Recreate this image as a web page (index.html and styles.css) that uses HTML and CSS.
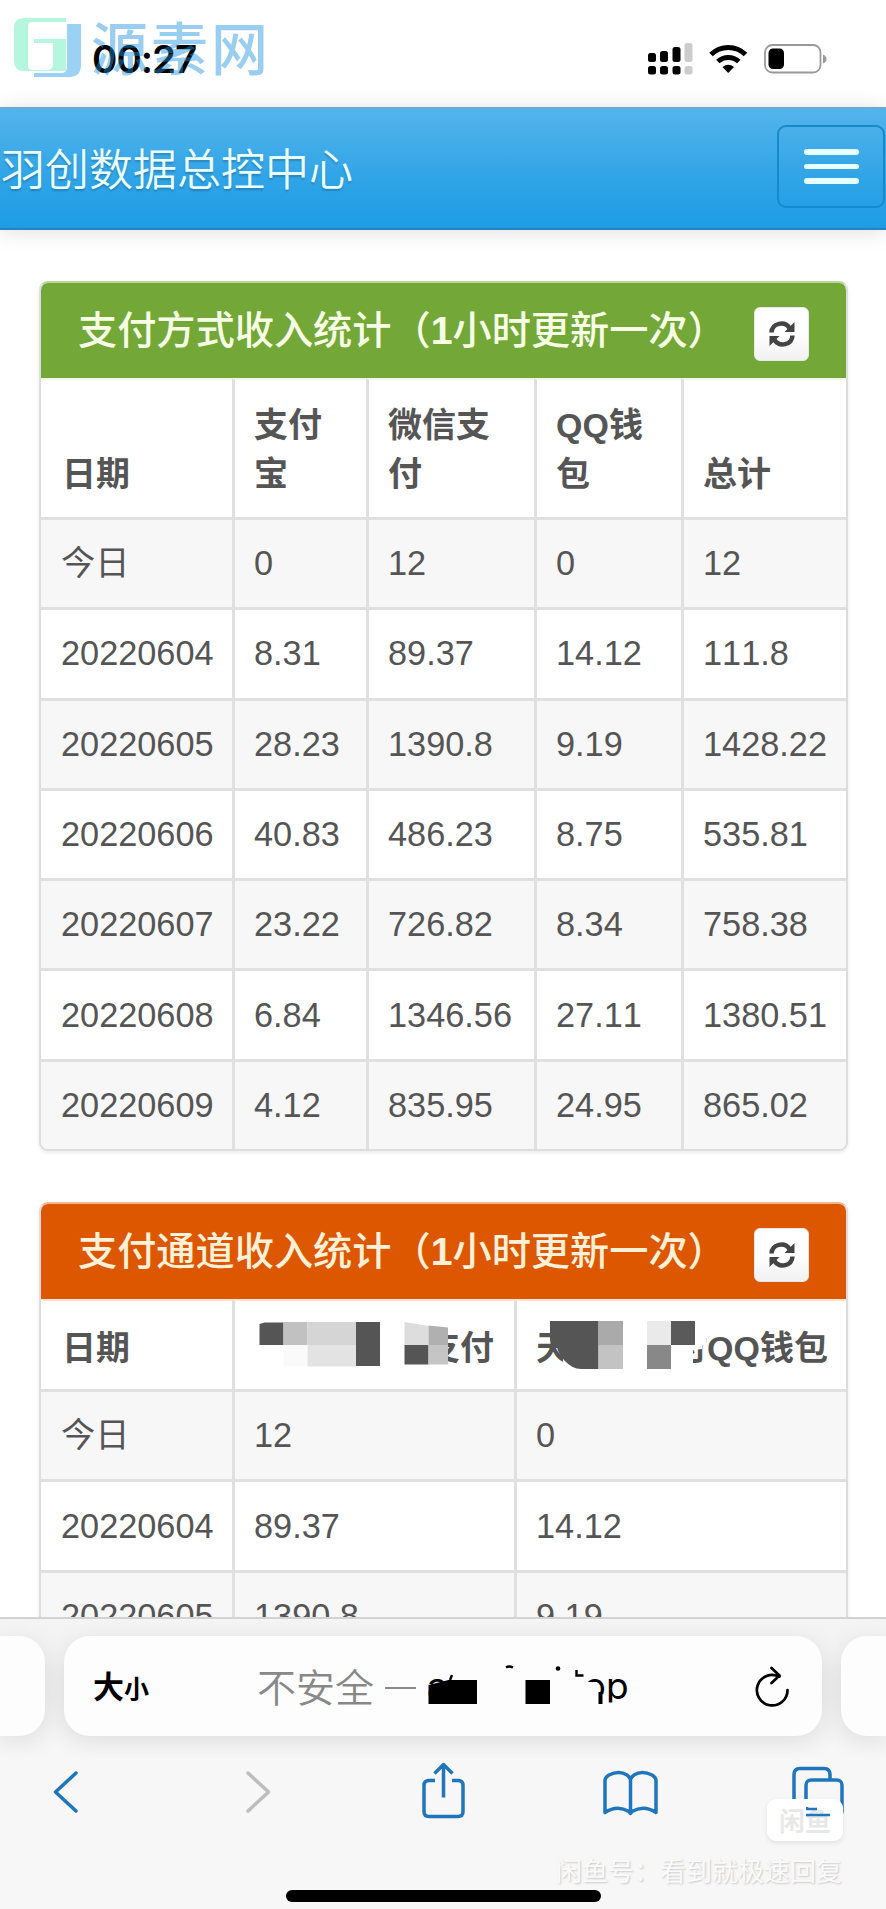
FILE: index.html
```html
<!DOCTYPE html>
<html lang="zh-CN">
<head>
<meta charset="utf-8">
<title>羽创数据总控中心</title>
<link rel="stylesheet" href="styles.css">
</head>
<body>
<div class="screen">
  <header class="status">
    <span class="time">00:27</span>
    <svg class="status-icons" width="180" height="34" viewBox="647 42 180 34">
      <g fill="#000"><rect x="648" y="53" width="8" height="9" rx="2.5"/><rect x="660" y="51" width="8" height="11" rx="2.5"/><rect x="672.500" y="47" width="8" height="15" rx="2.5"/><rect x="648" y="66" width="8" height="8.500" rx="2.500"/><rect x="660" y="66" width="8" height="8.500" rx="2.500"/><rect x="672.500" y="66" width="8" height="8.500" rx="2.500"/></g>
      <g fill="#ccc"><rect x="684.500" y="43" width="8" height="19" rx="2.500"/><rect x="684.500" y="66" width="8" height="8.500" rx="2.500"/></g>
      <g fill="none" stroke="#000" stroke-width="5"><path d="M711 54.500a24.500 24.500 0 0 1 34.500 0"/><path d="M717.800 61.500a15.500 15.500 0 0 1 21 0"/></g>
      <path d="M722.500 67q5.700-4.500 11.500 0l-5.800 6z"/>
      <rect x="765" y="45" width="55.500" height="27.500" rx="7.500" fill="none" stroke="#999" stroke-width="1.800"/>
      <rect x="768.500" y="48.500" width="15.500" height="20.500" rx="4.500"/><path d="M823 54.500q3.500 1.500 3.500 4.500t-3.500 4.500z" fill="#999"/>
    </svg>
    <div class="brand-mark">
      <svg width="68" height="60" viewBox="14 18 68 60">
        <path fill="#b4f6de" d="M66 18v4H32q-4 0-4 4v40q0 4 4 4h15q6 0 6-6V43H34v-4h32v32H24q-10 0-10-10V28q0-10 10-10z"/>
        <path fill="#9bd1f3" d="M67 24h14v41q0 12-12 12H34v-4h27q6 0 6-6z"/>
      </svg>
      <span class="brand-text">源素网</span>
    </div>
  </header>

  <nav class="navbar">
    <span class="navbar-brand">羽创数据总控中心</span>
    <button class="toggle" aria-label="菜单"><i></i><i></i><i></i></button>
  </nav>

  <main class="content">
    <section class="card green">
      <h2 class="card-head"><span>支付方式收入统计（<b>1</b>小时更新一次）</span>
        <button class="refresh" aria-label="刷新"><svg width="26" height="26" viewBox="0 0 26 26"><g fill="none" stroke="#444" stroke-width="4.500"><path d="M2.500 11.500C3 2 15.500-.5 20.500 7"/><path d="M23.500 14.500C23 24 10.500 26.500 5.500 19"/></g><path fill="#444" d="M25.500 1v10h-10zM.500 25V15h10z"/></svg></button></h2>
      <table class="grid five">
        <colgroup><col class="c1"><col class="c2"><col class="c3"><col class="c4"><col class="c5"></colgroup>
        <thead><tr><th>日期</th><th>支付<br>宝</th><th>微信支<br>付</th><th>QQ钱<br>包</th><th>总计</th></tr></thead>
        <tbody>
          <tr><td>今日</td><td>0</td><td>12</td><td>0</td><td>12</td></tr>
          <tr><td>20220604</td><td>8.31</td><td>89.37</td><td>14.12</td><td>111.8</td></tr>
          <tr><td>20220605</td><td>28.23</td><td>1390.8</td><td>9.19</td><td>1428.22</td></tr>
          <tr><td>20220606</td><td>40.83</td><td>486.23</td><td>8.75</td><td>535.81</td></tr>
          <tr><td>20220607</td><td>23.22</td><td>726.82</td><td>8.34</td><td>758.38</td></tr>
          <tr><td>20220608</td><td>6.84</td><td>1346.56</td><td>27.11</td><td>1380.51</td></tr>
          <tr><td>20220609</td><td>4.12</td><td>835.95</td><td>24.95</td><td>865.02</td></tr>
        </tbody>
      </table>
    </section>

    <section class="card orange">
      <h2 class="card-head"><span>支付通道收入统计（<b>1</b>小时更新一次）</span>
        <button class="refresh" aria-label="刷新"><svg width="26" height="26" viewBox="0 0 26 26"><g fill="none" stroke="#444" stroke-width="4.500"><path d="M2.500 11.500C3 2 15.500-.5 20.500 7"/><path d="M23.500 14.500C23 24 10.500 26.500 5.500 19"/></g><path fill="#444" d="M25.500 1v10h-10zM.500 25V15h10z"/></svg></button></h2>
      <table class="grid three">
        <colgroup><col class="c1"><col class="w2"><col class="w3"></colgroup>
        <thead><tr><th>日期</th>
          <th><div class="masked"><span class="tail-a">支付</span>
            <svg class="mosaic" width="200" height="50" viewBox="254 1319 200 50"><path fill="#555" d="M259.500 1324l5-1.500h19V1345h-24z"/><path fill="#c1c1c1" d="M283.500 1322H307.500v23h-24z"/><path fill="#d5d5d5" d="M307.500 1322h48.500v23h-48.500z"/><path fill="#fafafa" d="M283.500 1345h24v21.500h-24z"/><path fill="#e3e3e3" d="M307.500 1345h48.500v21.500h-48.500z"/><path fill="#555" d="M356 1322h24v44h-24z"/><path fill="#fff" d="M425 1319h23v50h-23z"/><path fill="#ddd" d="M404.500 1322l24 4v19h-24z"/><path fill="#b0b0b0" d="M428.500 1325.500l19.500 2V1345h-19.500z"/><path fill="#555" d="M404.500 1345h24v19.500h-24z"/><path fill="#c5c5c5" d="M428.500 1345H448v19.500h-19.500z"/></svg></div></th>
          <th><div class="masked"><span>天</span><span class="tail-b">付QQ钱包</span>
            <svg class="mosaic" width="175" height="50" viewBox="536 1319 175 50"><path fill="#fff" d="M563 1319h59v50h-59zM670 1319h36v26h-4v4l-9 1v20h-23z"/><path fill="#555" d="M550 1321h48.500v48H581q-9 0-17-9-6-7-7-13-7-1-7-8z"/><path fill="#aaa" d="M598.500 1321H623v24h-24.500z"/><path fill="#c3c3c3" d="M598.500 1345H623v24h-24.500z"/><path fill="#eaeaea" d="M647 1321h24v24h-24z"/><path fill="#5a5a5a" d="M671 1321h24v24h-24z"/><path fill="#888" d="M647 1345h24v24h-24z"/></svg></div></th></tr></thead>
        <tbody>
          <tr><td>今日</td><td>12</td><td>0</td></tr>
          <tr><td>20220604</td><td>89.37</td><td>14.12</td></tr>
          <tr><td>20220605</td><td>1390.8</td><td>9.19</td></tr>
        </tbody>
      </table>
    </section>
  </main>

  <footer class="safari">
    <div class="tabs">
      <div class="tab side-left"></div>
      <div class="tab address">
        <span class="size"><b>大</b><b class="small">小</b></span>
        <div class="url"><span class="insecure">不安全</span><span class="dash"></span><span class="host"><span>a</span><span class="top">op</span>
          <svg class="mosaic" width="205" height="60" viewBox="426 1660 205 60"><path fill="#fdfdfd" d="M580 1687h17l1 10 6 3v12h-24zM606 1707.500h10v8h-10z"/><path d="M428.500 1690l20-5h28.500v24h-48.500zM525.500 1685H550v24h-24.500z"/><circle cx="558" cy="1673.500" r="2.300"/><path d="M506 1672.500q3-2 7 0M576.500 1675v5.500h7M452 1680l-2 5" fill="none" stroke="#000" stroke-width="2.400"/><path d="M600.500 1697v12" stroke="#000" stroke-width="4"/></svg></span></div>
        <svg class="reload" width="40" height="44" viewBox="752 1662 40 44" fill="none" stroke="#000" stroke-width="2.700" stroke-linecap="round" stroke-linejoin="round"><path d="M787.500 1688a15.300 15.300 0 1 1-8-13.300M771.500 1666l8 7.500-8 7.500"/></svg>
      </div>
      <div class="tab side-right"></div>
    </div>
    <svg class="tools" width="886" height="64" viewBox="0 1759.500 886 64" fill="none" stroke="#1f76bd" stroke-width="3.500" stroke-linecap="round" stroke-linejoin="round">
      <path d="M76 1773.500L55.500 1792.500 76 1811.500"/>
      <path stroke="#bdbdbd" d="M248 1773.500l20.500 19-20.500 19"/>
      <path d="M435 1781h-6q-5 0-5 5v26q0 5 5 5h29q5 0 5-5v-26q0-5-5-5h-6M443.500 1798v-32M434.500 1774l9-9 9 9" stroke-linecap="butt"/>
      <path d="M605 1813v-32q0-3 4-5.500 10-5 18 0 3 2 3.500 5 .5-3 3.500-5 8-5 18 0 4 2.500 4 5.500v32q-12-8-24-1l-1.500 2-1.500-2q-12-7-24 1zM630.500 1780v33"/>
      <path d="M830 1779v-4q0-6-6-6h-24q-6 0-6 6v29q0 5 5 5h6"/><rect x="806" y="1780.500" width="36" height="36" rx="5"/>
    </svg>
    <div class="home"></div>
    <div class="badge"><span>闲鱼</span><svg width="24" height="12" viewBox="0 0 24 12" stroke="#1f76bd" fill="none"><path d="M1 0v2h10M0 8h24" stroke-width="2.500"/></svg></div>
    <div class="seller">闲鱼号：看到就极速回复</div>
  </footer>
</div>
</body>
</html>
```
FILE: styles.css
```css
* { box-sizing: border-box; }
body { margin: 0; background: #fff; }
.screen {
  width: 886px; height: 1909px; overflow: hidden;
  display: flex; flex-direction: column; font-kerning: none;
  font-family: "Liberation Sans", "Noto Sans CJK SC", sans-serif; color: #555;
}
button { padding: 0; font: inherit; }

.status { position: relative; height: 107px; flex: none; display: flex; align-items: flex-start; justify-content: space-between; padding: 0 59px 0 92px; }
.time { font: 600 38.500px/47px Inter, sans-serif; letter-spacing: -1px; color: #000; padding-top: 36px; }
.status-icons { margin-top: 42px; }
.brand-mark { position: absolute; left: 14px; top: 18px; display: flex; }
.brand-text { margin-left: 9px; margin-top: -5px; font: 500 57px/64px "Noto Sans CJK SC", sans-serif; letter-spacing: 3px; color: #1f95e0; opacity: .45; }

.navbar {
  height: 123px; flex: none; display: flex; align-items: center; justify-content: space-between;
  background: linear-gradient(#54b4eb, #2fa4e7 60%, #1d9ce5);
  border-top: 1px solid #6fa9bd; border-bottom: 2px solid #2583bd;
  box-shadow: 0 2px 20px rgba(0,0,0,.13); padding-right: 1px;
}
.navbar-brand { font: 350 44px/60px "Noto Sans CJK SC", sans-serif; color: #eaffff; text-shadow: 0 2px 2px rgba(0,0,0,.2); padding: 0 0 3px 1px; }
.toggle { width: 108px; height: 83px; margin-top: -3px; border: 2px solid #178acc; border-radius: 9px; background: none; display: flex; flex-direction: column; align-items: center; justify-content: center; gap: 9px; }
.toggle i { width: 55px; height: 5.700px; border-radius: 3px; background: #e6ffff; }

.content { height: 1387px; flex: none; overflow: hidden; padding: 51px 38px 0 39px; display: flex; flex-direction: column; gap: 51px; }
.card { flex: none; border: 2px solid #ddd; border-radius: 9px; box-shadow: 0 2px 4px rgba(0,0,0,.08); overflow: hidden; background: #fff; }
.card-head { margin: 0; height: 95px; padding: 0 37px 0 37px; display: flex; align-items: center; justify-content: space-between; font-size: 39.200px; font-weight: 500; line-height: 50px; white-space: nowrap; }
.green { border-top-color: #b9d99c; }
.green .card-head { background: #73a839; color: #f7ffe5; }
.orange { border-top-color: #f3b792; }
.orange .card-head { background: #dd5600; color: #fff1d8; }
.card-head b { font-weight: 700; }
.refresh { width: 55px; height: 54px; margin-top: 6px; border: 1px solid #e8e8e8; border-radius: 6px; background: linear-gradient(#fff, #fff 50%, #f1f1f1); display: flex; align-items: center; justify-content: center; }

.grid { width: 805px; table-layout: fixed; border-collapse: separate; border-spacing: 0; font-size: 34.300px; line-height: 49px; }
.c1 { width: 191px; } .c2 { width: 134px; } .c3 { width: 168px; } .c4 { width: 147px; } .c5 { width: 165px; }
.w2 { width: 282px; } .w3 { width: 332px; }
.grid th, .grid td { padding: 0 0 0 19px; border-top: 2px solid #d9d9d9; border-left: 3px solid #e0e0e0; text-align: left; white-space: nowrap; }
.grid td { border-top: 3px solid #e0e0e0; }
.grid th:first-child, .grid td:first-child { border-left: 0; }
.grid th { font-weight: 700; font-size: 34px; vertical-align: bottom; padding-bottom: 18px; height: 139px; border-top-color: #f1f6e9; }
.grid th:first-child { padding-left: 21px; }
.grid td:first-child { padding-left: 20px; }
.grid td { height: 90.300px; }
.grid tbody tr:nth-child(odd) { background: #f7f7f7; }
.three th { height: 90px; border-top-color: #ffe4d3; padding-bottom: 16px; }
.masked { position: relative; display: flex; height: 49px; }
.masked .mosaic { position: absolute; left: 0; top: -5px; }
.tail-a { margin-left: 172px; }
.tail-b { margin-left: 103px; }

.safari { position: relative; height: 292px; flex: none; background: #f7f7f7; border-top: 2px solid #d2d2d2; }
.tabs { height: 140px; display: flex; padding-top: 17px; gap: 19px; overflow: hidden; background: linear-gradient(#f4f4f4, #f0f0f0 50%, #f7f7f7); }
.tab { height: 100px; background: #fdfdfd; box-shadow: 0 6px 24px rgba(0,0,0,.09); }
.side-left { width: 45px; border-radius: 0 26px 26px 0; }
.side-right { width: 45px; border-radius: 26px 0 0 26px; }
.address { width: 758px; flex: none; border-radius: 26px; display: flex; align-items: center; padding: 0 30px 0 29px; }
.size { width: 164px; flex: none; color: #000; font: 500 31px/46px "Noto Sans CJK SC", sans-serif; display: flex; align-items: baseline; }
.size b { font-weight: 700; }
.size .small { font-size: 25px; font-weight: 700; }
.url { flex: 1; display: flex; align-items: center; }
.insecure { font: 350 39px/50px "Noto Sans CJK SC", sans-serif; color: #888; padding-bottom: 3px; }
.dash { width: 31px; height: 2.500px; background: #8a8a8a; margin: 4px 11px 0 11px; }
.host { position: relative; display: flex; width: 200px; font: 400 37px/50px Inter, sans-serif; color: #000; }
.host .mosaic { position: absolute; left: -1px; top: -6px; }
.host .top { margin-left: 136px; letter-spacing: 0; }
.reload { flex: none; }
.tools { display: block; }
.home { position: absolute; left: 286px; top: 271px; width: 315px; height: 12px; border-radius: 6px; background: #000; }
.badge { position: absolute; left: 767px; top: 180px; width: 76px; height: 42px; border-radius: 9px; background: #fff; box-shadow: 0 2px 5px rgba(0,0,0,.09); }
.badge span { display: block; text-align: center; font: 700 26px/41px "Noto Sans CJK SC", sans-serif; color: #e8e8e8; }
.badge svg { position: absolute; left: 39px; top: 8px; }
.seller { position: absolute; right: 44px; top: 233px; font: 400 26px/36px "Noto Sans CJK SC", sans-serif; color: #fafafa; text-shadow: 1px 1px 2px #c8c8c8; white-space: nowrap; }
```
